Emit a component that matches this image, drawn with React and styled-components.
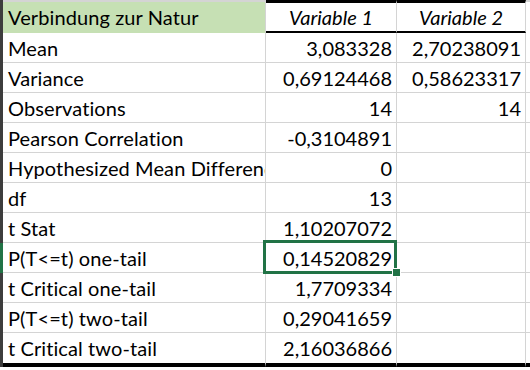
import React from "react";
import styled, { createGlobalStyle, css } from "styled-components";

const Global = createGlobalStyle`
  html, body { margin: 0; padding: 0; background: #ffffff; }
  body { font-family: Lato, "Liberation Sans", sans-serif; color: #000; }
`;

const GRID = "#d4d4d4";
const GREEN = "#217346";

const Sheet = styled.div`
  display: grid;
  grid-template-columns: 3px 263px 131px 129px 1fr;
  width: 530px;
  font-size: 20px;
  line-height: 1;
`;

const RowHead = styled.div`
  background: ${(p) => (p.$active ? GREEN : "#3d3d3d")};
  height: ${(p) => p.$h}px;
  box-sizing: border-box;
`;

const Cell = styled.div`
  position: relative;
  box-sizing: border-box;
  height: ${(p) => p.$h}px;
  display: flex;
  align-items: center;
  padding: 0 5px 0 5px;
  border-right: 1px solid ${GRID};
  border-bottom: ${(p) => (p.$last ? "4px solid #000" : `1px solid ${GRID}`)};
  justify-content: ${(p) => (p.$num ? "flex-end" : "flex-start")};
  white-space: nowrap;
  padding-right: ${(p) => (p.$num ? "4px" : "0")};
`;

const LabelCell = styled(Cell)`
  padding-left: 5px;
  padding-right: 0;
  overflow: hidden;
  letter-spacing: 0.1px;
`;

const HeadLabel = styled(LabelCell)`
  background: #c6e0b4;
  border-top: 2px solid ${GRID};
  border-bottom: 1px solid #c6e0b4;
  border-right: 1px solid ${GRID};
`;

const HeadVar = styled(Cell)`
  justify-content: center;
  font-style: italic;
  border-top: 3px solid #000;
  border-bottom: 2px solid #000;
  padding: 0;
`;

const Spare = styled.div`
  box-sizing: border-box;
  height: ${(p) => p.$h}px;
  ${(p) =>
    p.$head
      ? css`border-top: 2px solid ${GRID};`
      : p.$last
      ? css`border-bottom: 4px solid #000;`
      : css`border-bottom: 1px solid ${GRID};`}
`;

const Selection = styled.div`
  position: absolute;
  z-index: 2;
  left: -3px;
  top: -3px;
  right: -1px;
  bottom: -2px;
  border: 3px solid ${GREEN};
  pointer-events: none;
`;

const Handle = styled.div`
  position: absolute;
  box-sizing: border-box;
  right: -7px;
  bottom: -6px;
  width: 9px;
  height: 9px;
  background: ${GREEN};
  border: 1px solid #fff;
`;

const rows = [
  ["Mean", "3,083328", "2,70238091"],
  ["Variance", "0,69124468", "0,58623317"],
  ["Observations", "14", "14"],
  ["Pearson Correlation", "-0,3104891", ""],
  ["Hypothesized Mean Difference", "0", ""],
  ["df", "13", ""],
  ["t Stat", "1,10207072", ""],
  ["P(T<=t) one-tail", "0,14520829", ""],
  ["t Critical one-tail", "1,7709334", ""],
  ["P(T<=t) two-tail", "0,29041659", ""],
  ["t Critical two-tail", "2,16036866", ""],
];

const SELECTED = 7;

export default function App() {
  return (
    <>
      <Global />
      <Sheet>
        <RowHead $h={33} />
        <HeadLabel $h={33}>Verbindung zur Natur</HeadLabel>
        <HeadVar $h={33}>Variable 1</HeadVar>
        <HeadVar $h={33}>Variable 2</HeadVar>
        <Spare $h={33} $head />
        {rows.map(([label, v1, v2], i) => {
          const last = i === rows.length - 1;
          const h = last ? 34 : 30;
          return (
            <React.Fragment key={label}>
              <RowHead $h={h} $active={i === SELECTED} />
              <LabelCell $h={h} $last={last}>{label}</LabelCell>
              <Cell $h={h} $num $last={last}>
                {v1}
                {i === SELECTED && (
                  <Selection>
                    <Handle />
                  </Selection>
                )}
              </Cell>
              <Cell $h={h} $num $last={last}>{v2}</Cell>
              <Spare $h={h} $last={last} />
            </React.Fragment>
          );
        })}
      </Sheet>
    </>
  );
}
